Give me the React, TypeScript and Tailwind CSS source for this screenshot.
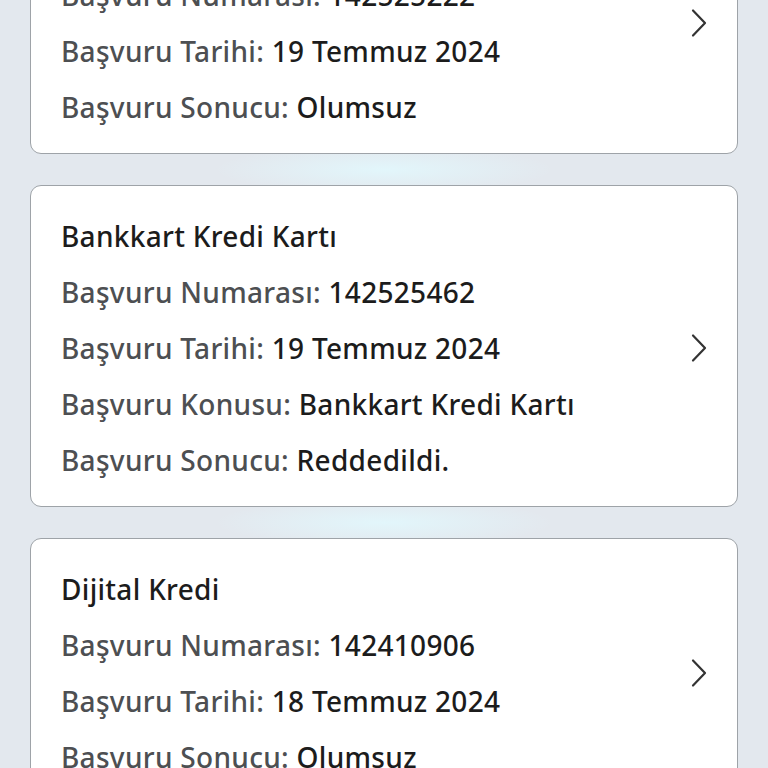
type Row = { label: string; value: string };
type Application = { title: string; rows: Row[] };

const applications: Application[] = [
  {
    title: "Dijital Kredi",
    rows: [
      { label: "Başvuru Numarası:", value: "142525222" },
      { label: "Başvuru Tarihi:", value: "19 Temmuz 2024" },
      { label: "Başvuru Sonucu:", value: "Olumsuz" },
    ],
  },
  {
    title: "Bankkart Kredi Kartı",
    rows: [
      { label: "Başvuru Numarası:", value: "142525462" },
      { label: "Başvuru Tarihi:", value: "19 Temmuz 2024" },
      { label: "Başvuru Konusu:", value: "Bankkart Kredi Kartı" },
      { label: "Başvuru Sonucu:", value: "Reddedildi." },
    ],
  },
  {
    title: "Dijital Kredi",
    rows: [
      { label: "Başvuru Numarası:", value: "142410906" },
      { label: "Başvuru Tarihi:", value: "18 Temmuz 2024" },
      { label: "Başvuru Sonucu:", value: "Olumsuz" },
    ],
  },
];

const Chevron = () => (
  <svg width="18" height="30" viewBox="0 0 18 30" fill="none" className="shrink-0">
    <path d="M3 2.5 L15 15 L3 27.5" stroke="#333" strokeWidth="2.2" strokeLinecap="round" strokeLinejoin="round" />
  </svg>
);

const Gap = () => (
  <div className="h-[31px] bg-[radial-gradient(ellipse_170px_24px_at_center,#e2f6fb,transparent)]" />
);

const ApplicationCard = ({ app }: { app: Application }) => (
  <div className="flex items-center rounded-[11px] border-[1.5px] border-[#9ea3a8] bg-white pl-[30px] pr-[29px] pt-[32px] pb-[28px]">
    <div className="flex flex-1 flex-col">
      <div className="h-[36px] leading-[36px] text-[#1c1c1c]">{app.title}</div>
      {app.rows.map((row) => (
        <div key={row.label} className="mt-[20px] h-[36px] whitespace-nowrap leading-[36px]">
          <span className="text-[#4d4f52]">{row.label}</span>{" "}
          <span className="text-[#1c1c1c]">{row.value}</span>
        </div>
      ))}
    </div>
    <Chevron />
  </div>
);

export default function App() {
  return (
    <div className="h-[768px] overflow-hidden bg-[#e3e8ee] px-[30px] font-['Noto_Sans',sans-serif] text-[28px] font-medium tracking-[0.3px]">
      <div className="-mt-[112px]">
        {applications.map((app, i) => (
          <div key={i}>
            {i > 0 && <Gap />}
            <ApplicationCard app={app} />
          </div>
        ))}
      </div>
    </div>
  );
}
